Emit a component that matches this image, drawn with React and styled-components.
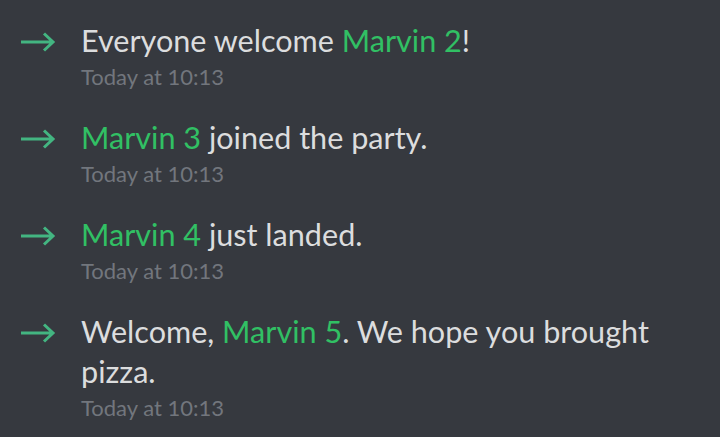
import React from 'react'
import styled, { createGlobalStyle } from 'styled-components'

const Global = createGlobalStyle`
  html, body {
    margin: 0;
    background: #36393f;
  }
`

const messages = [
  { id: 1, parts: ['Everyone welcome ', { name: 'Marvin 2' }, '!'] },
  { id: 2, parts: [{ name: 'Marvin 3' }, ' joined the party.'] },
  { id: 3, parts: [{ name: 'Marvin 4' }, ' just landed.'] },
  { id: 4, parts: ['Welcome, ', { name: 'Marvin 5' }, '. We hope you brought pizza.'] },
]

const Arrow = () => (
  <svg width="36" height="20" viewBox="0 0 36 20" fill="none">
    <path d="M1 10H33M24 1.5L33 10L24 18.5" stroke="#43b581" strokeWidth="3" />
  </svg>
)

const App = () => {
  return (
    <Chat>
      <Global />
      {messages.map(m => (
        <Message key={m.id}>
          <IconCol>
            <Arrow />
          </IconCol>
          <Body>
            <Content>
              {m.parts.map((p, i) =>
                typeof p === 'string' ? p : <Name key={i}>{p.name}</Name>
              )}
            </Content>
            <Stamp>Today at 10:13</Stamp>
          </Body>
        </Message>
      ))}
    </Chat>
  )
}

const Chat = styled.div`
  background: #36393f;
  min-height: 437px;
  padding: 21px 20px 0 20px;
  box-sizing: border-box;
  display: flex;
  flex-direction: column;
  gap: 27px;
  font-family: Lato, "Noto Sans", sans-serif;
`

const Message = styled.div`
  display: flex;
  align-items: flex-start;
`

const IconCol = styled.div`
  width: 61px;
  flex-shrink: 0;
  padding-top: 11px;
  svg {
    display: block;
  }
`

const Body = styled.div`
  display: flex;
  flex-direction: column;
  width: 600px;
`

const Content = styled.div`
  color: #dcddde;
  font-size: 30.6px;
  line-height: 40px;
`

const Name = styled.span`
  color: #31c064;
`

const Stamp = styled.div`
  color: #72767d;
  font-size: 22px;
  line-height: 28px;
  margin-top: 2px;
`

export default App
